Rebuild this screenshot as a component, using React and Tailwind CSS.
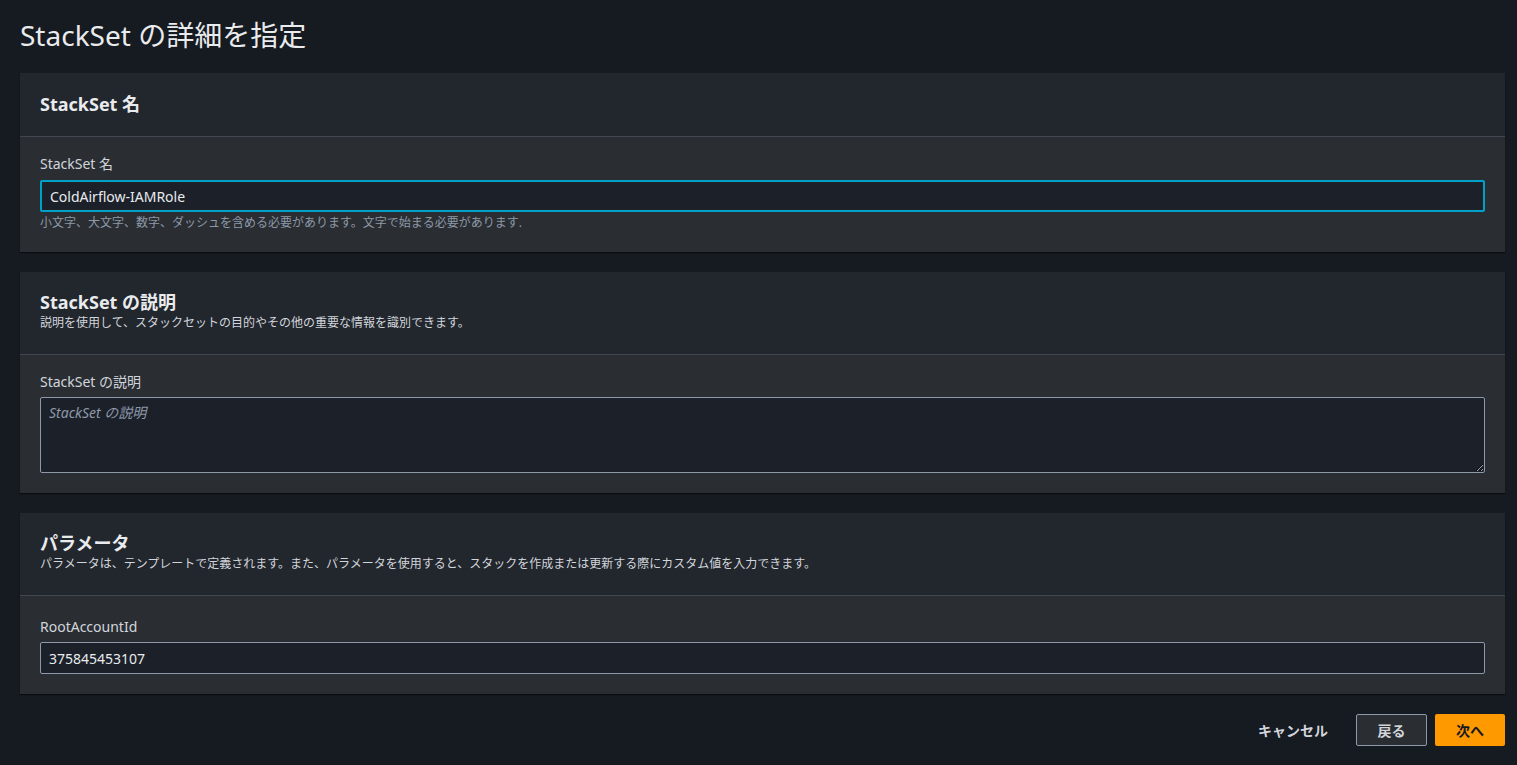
export default function App() {
  const font = { fontFamily: '"Noto Sans", "Noto Sans CJK JP", sans-serif' };
  return (
    <div className="min-h-[765px] bg-[#161a21] text-[#d1d5db] pl-5 pr-3 pb-5" style={font}>
      <h1 className="pt-[17px] h-[73px] text-[28px] leading-[36px] text-[#e9ebed] font-normal">StackSet の詳細を指定</h1>

      <section className="bg-[#2a2e33] shadow-[0_1px_1px_rgba(0,0,0,0.5)]">
        <div className="bg-[#22262d] h-[64px] px-5 flex items-center border-b border-[#414750]">
          <h2 className="text-[18px] font-bold text-[#e9ebed] leading-[22px] mt-[-2px]">StackSet 名</h2>
        </div>
        <div className="px-5 pt-[16px] pb-[20px]">
          <label className="block text-[14px] leading-[22px] text-[#d1d5db] mb-[5px]">StackSet 名</label>
          <input
            className="w-full h-[32px] bg-[#1b2029] border-2 border-[#00a1c9] rounded-[2px] px-[8px] text-[14px] text-[#e9ebed] outline-none"
            defaultValue="ColdAirflow-IAMRole"
            style={font}
          />
          <p className="text-[12px] leading-[18px] text-[#8d99a8] mt-[2px]">小文字、大文字、数字、ダッシュを含める必要があります。文字で始まる必要があります.</p>
        </div>
      </section>

      <section className="mt-[20px] bg-[#2a2e33] shadow-[0_1px_1px_rgba(0,0,0,0.5)]">
        <div className="bg-[#22262d] h-[83px] px-5 pt-[18px] border-b border-[#414750]">
          <h2 className="text-[18px] font-bold text-[#e9ebed] leading-[24px]">StackSet の説明</h2>
          <p className="text-[12px] leading-[18px] text-[#d1d5db]">説明を使用して、スタックセットの目的やその他の重要な情報を識別できます。</p>
        </div>
        <div className="px-5 pt-[16px] pb-[20px]">
          <label className="block text-[14px] leading-[22px] text-[#d1d5db] mb-[4px]">StackSet の説明</label>
          <textarea
            className="block w-full h-[76px] bg-[#1b2029] border border-[#8d99a8] rounded-[2px] px-[8px] py-[4px] text-[14px] text-[#e9ebed] placeholder:text-[#8d99a8] placeholder:italic outline-none"
            placeholder="StackSet の説明"
            style={font}
          />
        </div>
      </section>

      <section className="mt-[20px] bg-[#2a2e33] shadow-[0_1px_1px_rgba(0,0,0,0.5)]">
        <div className="bg-[#22262d] h-[83px] px-5 pt-[18px] border-b border-[#414750]">
          <h2 className="text-[18px] font-bold text-[#e9ebed] leading-[24px]">パラメータ</h2>
          <p className="text-[12px] leading-[18px] text-[#d1d5db]">パラメータは、テンプレートで定義されます。また、パラメータを使用すると、スタックを作成または更新する際にカスタム値を入力できます。</p>
        </div>
        <div className="px-5 pt-[20px] pb-[20px]">
          <label className="block text-[14px] leading-[22px] text-[#d1d5db] mb-[4px]">RootAccountId</label>
          <input
            className="w-full h-[32px] bg-[#1b2029] border border-[#8d99a8] rounded-[2px] px-[8px] text-[14px] text-[#e9ebed] outline-none"
            defaultValue="375845453107"
            style={font}
          />
        </div>
      </section>

      <div className="mt-[20px] flex justify-end items-center gap-2">
        <button className="h-[32px] px-5 text-[14px] font-bold text-[#d1d5db]">キャンセル</button>
        <button className="h-[32px] w-[71px] border border-[#8d99a8] bg-[#2a2e33] rounded-[2px] text-[14px] font-bold text-[#d1d5db]">戻る</button>
        <button className="h-[32px] w-[70px] bg-[#ff9900] rounded-[2px] text-[14px] font-bold text-[#16191f]">次へ</button>
      </div>
    </div>
  );
}
